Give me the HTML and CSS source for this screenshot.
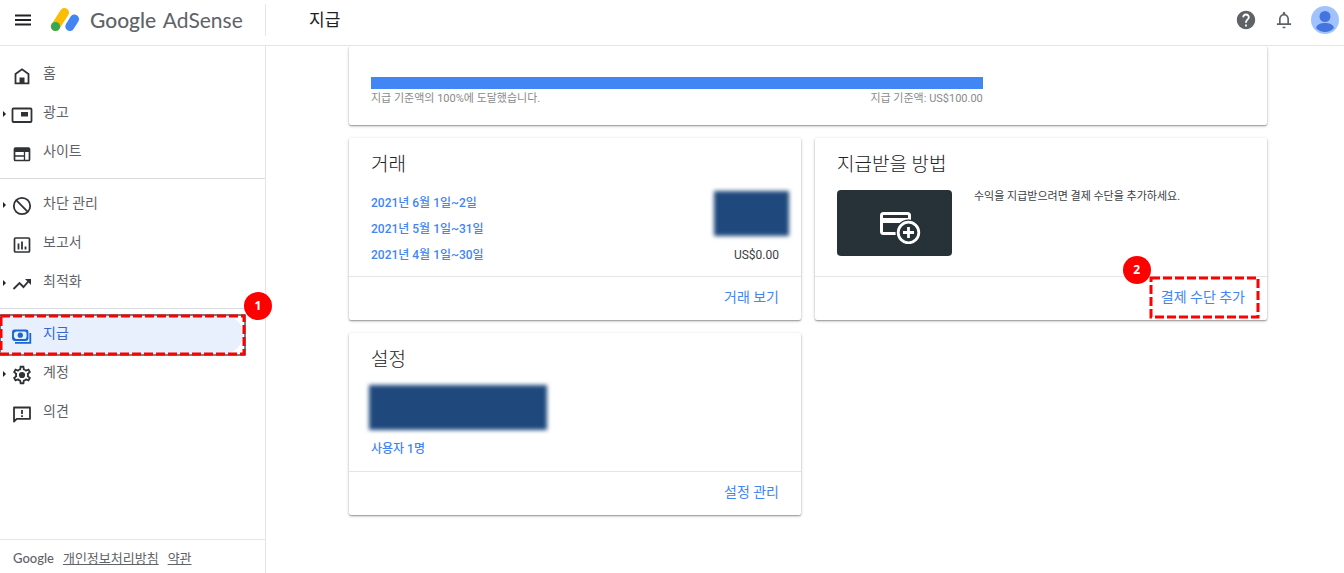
FILE: index.html
```html
<!DOCTYPE html>
<html lang="ko">
<head>
    <meta charset="UTF-8">
    <title>Google AdSense - 지급</title>
    <link rel="stylesheet" href="styles.css">
</head>
<body>
    <header class="topbar">
        <div class="brand">
            <button class="icon-btn menu-btn" aria-label="메뉴">
                <svg width="18" height="12" viewBox="0 0 18 12"><path d="M1 1.500h16M1 6h16M1 10.500h16" stroke="#202124" stroke-width="1.800"/></svg>
            </button>
            <a class="logo" href="#">
                <svg width="30" height="26" viewBox="0 0 30 26">
                    <path d="M5.500 19.500L14.500 5.500" stroke="#fbbc04" stroke-width="9" stroke-linecap="round"/>
                    <path d="M19.800 19.500L24.500 12" stroke="#4285f4" stroke-width="9" stroke-linecap="round"/>
                    <circle cx="5.500" cy="19.500" r="4.600" fill="#34a853"/>
                </svg>
                <span class="logo-text"><b>Google</b> AdSense</span>
            </a>
        </div>
        <h1 class="page-title">지급</h1>
        <div class="actions">
            <button class="icon-btn" aria-label="도움말">
                <svg width="22" height="22" viewBox="0 0 24 24"><path fill="#5f6368" d="M12 2C6.480 2 2 6.480 2 12s4.480 10 10 10 10-4.480 10-10S17.520 2 12 2zm1 17h-2v-2h2v2zm2.070-7.750l-.9.920C13.450 12.900 13 13.500 13 15h-2v-.5c0-1.100.450-2.100 1.170-2.830l1.240-1.260c.370-.360.590-.860.590-1.410 0-1.100-.9-2-2-2s-2 .9-2 2H8c0-2.210 1.790-4 4-4s4 1.790 4 4c0 .880-.360 1.680-.930 2.250z"/></svg>
            </button>
            <button class="icon-btn" aria-label="알림">
                <svg width="20" height="20" viewBox="0 0 24 24"><path fill="#5f6368" d="M12 22c1.100 0 2-.9 2-2h-4c0 1.100.9 2 2 2zm6-6v-5c0-3.070-1.630-5.640-4.500-6.320V4c0-.830-.670-1.500-1.500-1.500s-1.500.670-1.500 1.500v.680C7.640 5.360 6 7.920 6 11v5H3.500v2h17v-2H18zm-2 0H8v-5c0-2.480 1.510-4.500 4-4.500s4 2.020 4 4.500v5z"/></svg>
            </button>
            <button class="icon-btn" aria-label="계정">
                <svg width="28" height="28" viewBox="0 0 28 28">
                    <circle cx="14" cy="14" r="14" fill="#a0c3ff"/>
                    <circle cx="14" cy="10.500" r="5.500" fill="#4374e0"/>
                    <path d="M5 22c1-4 5-5 9-5s8 1 9 5c-2.500 2.700-5.500 4-9 4s-6.500-1.300-9-4z" fill="#4374e0"/>
                </svg>
            </button>
        </div>
    </header>

    <div class="layout">
        <aside class="sidebar">
            <nav>
                <ul class="nav-group">
                    <li><a class="nav-item" href="#">
                        <svg class="nav-icon" viewBox="0 0 22 22"><path d="M4.500 9v9.300h13V9L11 4.300z" fill="none" stroke="#303236" stroke-width="1.800"/><path d="M8.500 12.500h5v6h-5z" fill="#303236"/></svg>
                        홈</a></li>
                    <li><a class="nav-item expandable" href="#">
                        <svg class="nav-icon" viewBox="0 0 22 22"><rect x="1.500" y="4.500" width="19" height="13.500" rx="1" fill="none" stroke="#303236" stroke-width="1.800"/><path d="M10 8h7v4.500h-7z" fill="#303236"/></svg>
                        광고</a></li>
                    <li><a class="nav-item" href="#">
                        <svg class="nav-icon" viewBox="0 0 22 22"><rect x="3.500" y="5" width="15" height="12.500" rx="1" fill="none" stroke="#303236" stroke-width="1.700"/><path d="M3 5h16v4H3z" fill="#303236"/><path d="M4 13h9M13.500 9v8" stroke="#303236" stroke-width="1.300"/></svg>
                        사이트</a></li>
                </ul>
                <ul class="nav-group">
                    <li><a class="nav-item expandable" href="#">
                        <svg class="nav-icon" viewBox="0 0 22 22"><circle cx="11" cy="11" r="8.200" fill="none" stroke="#303236" stroke-width="1.800"/><path d="M5.200 5.200l11.600 11.600" stroke="#303236" stroke-width="1.800"/></svg>
                        차단 관리</a></li>
                    <li><a class="nav-item" href="#">
                        <svg class="nav-icon" viewBox="0 0 22 22"><rect x="3.500" y="4" width="15" height="14" rx="1" fill="none" stroke="#303236" stroke-width="1.700"/><path d="M7.500 9.500v6M11 7.500v8M14.500 12.500v3" stroke="#303236" stroke-width="1.800"/></svg>
                        보고서</a></li>
                    <li><a class="nav-item expandable" href="#">
                        <svg class="nav-icon" viewBox="0 0 22 22"><path d="M2.500 16l6-6 4 4 6-7" fill="none" stroke="#303236" stroke-width="1.900"/><path d="M14 6h6v6z" fill="#303236"/></svg>
                        최적화</a></li>
                </ul>
                <ul class="nav-group">
                    <li class="marked">
                        <a class="nav-item active" href="#">
                        <svg class="nav-icon" viewBox="0 0 22 22"><rect x="2" y="5.500" width="14.500" height="9.500" rx="1.500" fill="none" stroke="#1967d2" stroke-width="1.900"/><path d="M2 5.500h3.500L2 9zM17 5.500h-3.500L17 9zM2 15v-4l3.500 4zM17 15v-4L13.500 15z" fill="#1967d2"/><circle cx="9.300" cy="10.200" r="2.600" fill="#1967d2"/><path d="M4 17.800h15.300V8" fill="none" stroke="#1967d2" stroke-width="1.800"/></svg>
                        지급</a>
                        <svg class="mark-box"><rect class="mark-base"/><rect class="mark-dash" width="100%" height="100%"/></svg>
                        <span class="mark-num">1</span>
                    </li>
                    <li><a class="nav-item expandable" href="#">
                        <svg class="nav-icon" viewBox="0 0 24 24"><path fill="#303236" d="M19.430 12.980c.040-.320.070-.640.070-.980 0-.340-.030-.660-.070-.980l2.110-1.650c.190-.150.240-.420.120-.640l-2-3.460c-.090-.160-.260-.250-.440-.250-.060 0-.120.010-.170.030l-2.490 1c-.520-.400-1.080-.730-1.690-.980l-.380-2.650C14.460 2.180 14.250 2 14 2h-4c-.250 0-.460.180-.490.420l-.380 2.650c-.610.250-1.170.590-1.690.980l-2.490-1c-.060-.020-.120-.030-.180-.030-.170 0-.340.090-.430.250l-2 3.460c-.130.220-.070.490.120.640l2.110 1.650c-.040.320-.070.650-.070.980 0 .330.030.660.070.980l-2.110 1.650c-.190.150-.240.420-.120.640l2 3.460c.090.160.260.250.440.250.060 0 .120-.010.170-.030l2.490-1c.520.400 1.080.730 1.690.980l.380 2.650c.030.240.240.420.490.420h4c.250 0 .460-.180.490-.420l.380-2.650c.610-.250 1.170-.590 1.690-.980l2.490 1c.060.020.120.030.180.030.170 0 .340-.090.430-.250l2-3.460c.120-.220.070-.490-.120-.640l-2.110-1.650zm-1.980-1.710c.040.310.050.520.050.730 0 .210-.020.430-.050.730l-.140 1.130.890.700 1.080.840-.7 1.210-1.270-.510-1.040-.420-.9.680c-.430.320-.840.560-1.250.730l-1.060.430-.160 1.130-.2 1.350h-1.400l-.190-1.350-.160-1.130-1.060-.430c-.430-.180-.830-.410-1.230-.710l-.910-.7-1.060.430-1.270.510-.7-1.210 1.080-.840.890-.7-.140-1.130c-.030-.310-.050-.540-.050-.740s.020-.430.050-.730l.140-1.130-.890-.7-1.080-.840.7-1.210 1.270.510 1.040.420.9-.680c.430-.320.840-.560 1.250-.730l1.060-.430.160-1.130.2-1.350h1.390l.190 1.350.160 1.130 1.060.430c.430.180.830.410 1.230.710l.910.7 1.060-.430 1.270-.510.7 1.210-1.070.850-.890.7.140 1.130z"/><circle cx="12" cy="12" r="3.400" fill="#303236"/></svg>
                        계정</a></li>
                    <li><a class="nav-item" href="#">
                        <svg class="nav-icon" viewBox="0 0 22 22"><path d="M3 18.500V4.500h16v11.300H5.700z" fill="none" stroke="#303236" stroke-width="1.800" stroke-linejoin="round"/><path d="M11 7v4M11 12.300v1.800" stroke="#303236" stroke-width="1.800"/></svg>
                        의견</a></li>
                </ul>
            </nav>
            <footer class="side-footer">
                <b class="google">Google</b>
                <a href="#">개인정보처리방침</a>
                <a href="#">약관</a>
            </footer>
        </aside>

        <main class="cards">
            <section class="card card-wide">
                <div class="threshold">
                    <div class="bar"></div>
                    <div class="threshold-labels">
                        <span>지급 기준액의 100%에 도달했습니다.</span>
                        <span>지급 기준액: US$100.00</span>
                    </div>
                </div>
            </section>

            <section class="card">
                <div class="card-body">
                    <h2>거래</h2>
                    <div class="transactions">
                        <ul class="links">
                            <li><a href="#">2021년 6월 1일~2일</a></li>
                            <li><a href="#">2021년 5월 1일~31일</a></li>
                            <li><a href="#">2021년 4월 1일~30일</a></li>
                        </ul>
                        <div class="amounts">
                            <div class="redacted redacted-amount"></div>
                            <span>US$0.00</span>
                        </div>
                    </div>
                </div>
                <div class="card-footer"><a href="#">거래 보기</a></div>
            </section>

            <section class="card">
                <div class="card-body">
                    <h2>지급받을 방법</h2>
                    <div class="method">
                        <div class="method-tile">
                            <svg width="42" height="34" viewBox="0 0 42 34">
                                <rect x="2.500" y="3.500" width="28" height="20" rx="2" fill="none" stroke="#fff" stroke-width="3"/>
                                <path d="M2 10.500h28" stroke="#fff" stroke-width="5"/>
                                <circle cx="29.500" cy="22.500" r="13" fill="#263238"/>
                                <circle cx="29.500" cy="22.500" r="10.300" fill="none" stroke="#fff" stroke-width="2.800"/>
                                <path d="M24 22.500h11M29.500 17v11" stroke="#fff" stroke-width="2.800"/>
                            </svg>
                        </div>
                        <p>수익을 지급받으려면 결제 수단을 추가하세요.</p>
                    </div>
                </div>
                <div class="card-footer">
                    <div class="marked">
                        <a href="#">결제 수단 추가</a>
                        <svg class="mark-box"><rect class="mark-dash" width="100%" height="100%"/></svg>
                        <span class="mark-num">2</span>
                    </div>
                </div>
            </section>

            <section class="card">
                <div class="card-body">
                    <h2>설정</h2>
                    <div class="redacted redacted-profile"></div>
                    <ul class="links">
                        <li><a href="#">사용자 1명</a></li>
                    </ul>
                </div>
                <div class="card-footer"><a href="#">설정 관리</a></div>
            </section>
        </main>
    </div>
</body>
</html>
```
FILE: styles.css
```css
* {
    box-sizing: border-box;
}
body {
    margin: 0;
    min-height: 100vh;
    display: flex;
    flex-direction: column;
    background: #fff;
    color: #3c4043;
    font-family: Roboto, "Noto Sans CJK KR", sans-serif;
    font-size: 12px;
}
h1, h2, p, ul {
    margin: 0;
    padding: 0;
    font-weight: 400;
}
ul {
    list-style: none;
}
a {
    color: #4285f4;
    text-decoration: none;
}
svg {
    display: block;
}

/* top bar */
.topbar {
    display: flex;
    align-items: center;
    height: 46px;
    padding: 0 5px 6px 0;
    border-bottom: 1px solid #e4e5e7;
}
.brand {
    display: flex;
    align-items: center;
    width: 266px;
    height: 32px;
    padding-left: 14px;
    border-right: 1px solid #e4e5e7;
}
.icon-btn {
    padding: 0;
    border: none;
    background: none;
    cursor: pointer;
}
.menu-btn {
    margin-right: 18px;
}
.logo {
    display: flex;
    align-items: center;
    gap: 10px;
}
.logo-text {
    font-family: Lato, sans-serif;
    font-size: 21px;
    line-height: 26px;
    color: #5f6368;
}
.logo-text b {
    margin-right: 2px;
    font-weight: 500;
}
.page-title {
    margin-left: 43px;
    font-size: 17px;
    line-height: 32px;
    color: #202124;
}
.actions {
    display: flex;
    align-items: center;
    gap: 17px;
    margin-left: auto;
}

/* sidebar */
.layout {
    flex: 1;
    display: flex;
}
.sidebar {
    flex: none;
    display: flex;
    flex-direction: column;
    justify-content: space-between;
    width: 266px;
    border-right: 1px solid #e4e5e7;
}
.sidebar nav {
    padding-top: 9px;
}
.nav-group + .nav-group {
    margin-top: 6px;
    padding-top: 6px;
    border-top: 1px solid #dadce0;
}
.nav-item {
    display: flex;
    align-items: center;
    gap: 10px;
    height: 39px;
    margin-right: 22px;
    padding: 0 0 3px 11px;
    border-radius: 0 20px 20px 0;
    color: #5f6368;
    font-size: 14px;
    line-height: 20px;
}
.nav-icon {
    width: 22px;
    height: 22px;
    margin-top: 6px;
}
.expandable {
    padding-left: 3px;
}
.expandable::before {
    content: "";
    margin: 3px -5px 0 0;
    border: 3px solid transparent;
    border-left-color: #202124;
    border-right: none;
}
.active {
    background: #e8f0fe;
    color: #3367d6;
}
.side-footer {
    display: flex;
    align-items: center;
    gap: 9px;
    height: 34px;
    padding: 2px 13px 0;
    border-top: 1px solid #e4e5e7;
    font-size: 13px;
    color: #5f6368;
}
.side-footer a {
    color: #5f6368;
    text-decoration: underline;
}
.google {
    font-family: Lato, sans-serif;
    font-weight: 500;
}

/* cards */
.cards {
    flex: 1;
    display: grid;
    grid-template-columns: 1fr 1fr;
    align-content: start;
    gap: 13px 14px;
    padding: 0 77px 58px 83px;
}
.card {
    border-radius: 2px;
    background: #fff;
    box-shadow: 0 1px 3px rgba(0, 0, 0, 0.3), 0 1px 1px rgba(0, 0, 0, 0.2);
}
.card-wide {
    grid-column: 1 / -1;
    padding: 31px 22px 17px;
    clip-path: inset(0 -4px -4px);
}
.threshold {
    width: 70%;
}
.bar {
    height: 12px;
    background: #4285f4;
}
.threshold-labels {
    display: flex;
    justify-content: space-between;
    font-size: 11px;
    line-height: 19px;
    color: #8a8a8a;
}
.card-body {
    height: 138px;
    padding: 11px 22px 0;
}
.card h2 {
    margin-bottom: 9px;
    font-size: 19px;
    font-weight: 300;
    line-height: 32px;
    color: #212121;
}
.links a {
    display: block;
    font-weight: 500;
    line-height: 26px;
}
.transactions {
    display: flex;
    justify-content: space-between;
}
.amounts {
    display: flex;
    flex-direction: column;
    align-items: flex-end;
    line-height: 26px;
}
.redacted {
    background: #1f497d;
    filter: blur(2px);
}
.redacted-amount {
    width: 75px;
    height: 45px;
    margin: 1px -10px 6px 0;
}
.redacted-profile {
    width: 178px;
    height: 45px;
    margin: 0 -2px 6px;
}
.method {
    display: flex;
    gap: 22px;
}
.method-tile {
    display: flex;
    align-items: center;
    justify-content: center;
    flex: none;
    width: 115px;
    height: 66px;
    padding: 8px 0 0 11px;
    border-radius: 4px;
    background: #263238;
}
.method p {
    font-size: 11px;
    line-height: 14px;
}
.card-footer {
    display: flex;
    align-items: center;
    justify-content: flex-end;
    height: 44px;
    padding: 0 22px 6px;
    border-top: 1px solid #e4e5e7;
    font-size: 14px;
}

/* numbered step markers */
.marked {
    position: relative;
}
.mark-box {
    position: absolute;
    overflow: visible;
    pointer-events: none;
}
.mark-box rect {
    fill: none;
    stroke-width: 3px;
}
.mark-box .mark-base {
    x: -1px;
    y: -1px;
    width: calc(100% + 2px);
    height: calc(100% + 2px);
    stroke: #000;
    stroke-width: 1px;
}
.mark-dash {
    stroke: #f00;
    stroke-dasharray: 9px 3px;
}
.mark-num {
    position: absolute;
    width: 28px;
    height: 28px;
    border-radius: 50%;
    background: #f00;
    color: #fff;
    font: 700 12px/28px "Noto Sans", sans-serif;
    text-align: center;
}
.nav-group .mark-box {
    top: 1px;
    left: 1px;
    width: 243px;
    height: 38px;
}
.nav-group .mark-num {
    top: -23px;
    left: 244px;
}
.card-footer .mark-box {
    top: -8px;
    left: -10px;
    width: 107px;
    height: 39px;
}
.card-footer .mark-num {
    top: -30px;
    left: -38px;
}
```
